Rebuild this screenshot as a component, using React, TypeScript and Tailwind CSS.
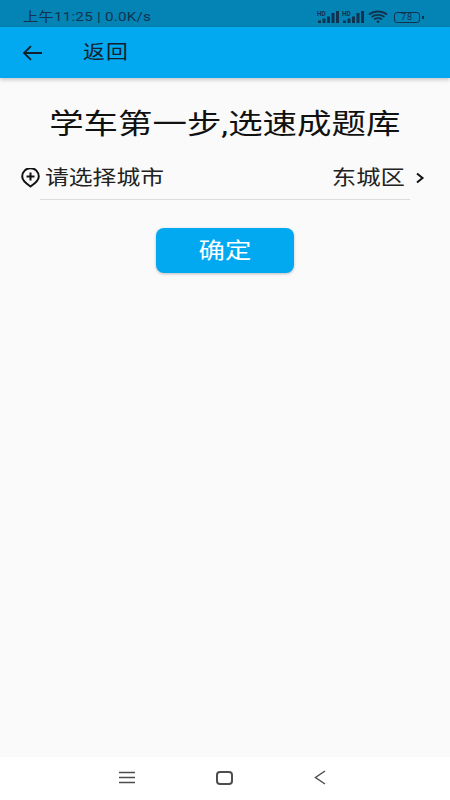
import React from "react";

const cjk = "font-['Roboto','Noto_Sans_CJK_SC',sans-serif]";

const Signal = () => (
  <svg width="22" height="14" viewBox="0 0 22 14" fill="#12334f">
    <text x="0" y="6" fontSize="6.5" fontWeight="700" fontFamily="Roboto, sans-serif">HD</text>
    <rect x="1" y="10.500" width="3" height="2.500" />
    <rect x="5.500" y="8.500" width="3" height="4.500" />
    <rect x="10" y="6.500" width="3" height="6.500" />
    <rect x="14.500" y="3" width="3" height="10" />
    <rect x="19" y="1" width="3" height="12" />
  </svg>
);

const StatusBar = () => (
  <div className="h-[27px] bg-[#0384b5] flex items-center justify-between pl-[23px] pr-[26px] text-[#12334f]">
    <span className="inline-block origin-left scale-x-[1.17] text-[13px] leading-none tracking-[0.2px] mt-[6px]">上午11:25 | 0.0K/s</span>
    <div className="flex items-center gap-[3px] mt-[7px]">
      <Signal />
      <Signal />
      <svg width="20" height="14" viewBox="0 0 20 14" fill="none" stroke="#12334f" strokeWidth="1.800" className="ml-[1px]">
        <path d="M1 4.500C6 .5 14 .5 19 4.500" />
        <path d="M3.500 7C7 4.200 13 4.200 16.500 7" />
        <path d="M6 9.500C8.200 7.800 11.800 7.800 14 9.500" />
        <circle cx="10" cy="11.800" r="1.300" fill="#12334f" stroke="none" />
      </svg>
      <div className="flex items-center ml-[3px]">
        <div className="w-[26px] h-[11px] rounded-[3px] border border-[#12334f] flex items-center justify-center font-['Roboto',sans-serif] text-[9px] tracking-[1px] leading-none">78</div>
        <div className="w-[2px] h-[3px] bg-[#12334f] ml-[2px]" />
      </div>
    </div>
  </div>
);

export default function App() {
  return (
    <div className={`${cjk} w-[450px] h-[800px] flex flex-col bg-[#fafafa] overflow-hidden`}>
      <StatusBar />
      <div className="h-[51px] bg-[#03a9f0] flex items-center pl-[22px] shadow-[0_2px_4px_rgba(0,0,0,0.2)] text-[#10202c]">
        <svg width="21" height="16" viewBox="0 0 21 16" fill="none" stroke="currentColor" strokeWidth="1.800">
          <path d="M20 8H2M9 1.200 2 8l7 6.800" />
        </svg>
        <span className="inline-block origin-left scale-x-[1.15] ml-[40px] text-[19px] tracking-[1px] leading-none">返回</span>
      </div>
      <div className="flex-1 flex flex-col items-center">
        <h1 className="mt-[30px] scale-x-[1.23] text-[28px] leading-[33px] font-normal text-[#111] whitespace-nowrap">学车第一步,选速成题库</h1>
        <div className="w-full mt-[23px] pl-[21px] pr-[25px] flex items-center h-[27px] text-[#222]">
          <svg width="19" height="20" viewBox="0 0 19 20" fill="none" stroke="#111" strokeWidth="2">
            <path d="M9.500 18.500C5 15.500 1.200 12.500 1.200 8.500a8.300 8.300 0 0 1 16.600 0c0 4-3.800 7-8.300 10Z" />
            <path d="M5.500 8.500h8M9.500 4.500v8" />
          </svg>
          <span className="inline-block origin-left scale-x-[1.19] ml-[5px] text-[20px] leading-none">请选择城市</span>
          <span className="inline-block origin-right scale-x-[1.22] ml-auto text-[20px] leading-none">东城区</span>
          <svg width="10" height="12" viewBox="0 0 10 12" fill="none" stroke="#111" strokeWidth="2" className="ml-[10px]">
            <path d="M2 1.500 7.500 6 2 10.500" />
          </svg>
        </div>
        <div className="w-[370px] h-[1px] bg-[#dcdcdc] mt-[8px]" />
        <button className="mt-[28px] w-[138px] h-[45px] rounded-[8px] bg-[#03a9f0] text-white text-[22px] leading-none shadow-[0_1px_3px_rgba(0,0,0,0.25)]">
          <span className="inline-block scale-x-[1.2]">确定</span>
        </button>
      </div>
      <div className="h-[43px] bg-white flex items-center justify-center">
        <div className="flex items-center gap-[81px] pb-[2px] pr-[6px] text-[#4d4d4d]">
          <svg width="16" height="13" viewBox="0 0 16 13" stroke="currentColor" strokeWidth="1.500">
            <path d="M0 1.500h16M0 6.500h16M0 11.500h16" />
          </svg>
          <div className="w-[17px] h-[14px] rounded-[4px] border-2 border-[#4d4d4d]" />
          <svg width="12" height="15" viewBox="0 0 12 15" fill="none" stroke="currentColor" strokeWidth="1.500">
            <path d="M11 1 1.500 7.500 11 14" />
          </svg>
        </div>
      </div>
    </div>
  );
}
